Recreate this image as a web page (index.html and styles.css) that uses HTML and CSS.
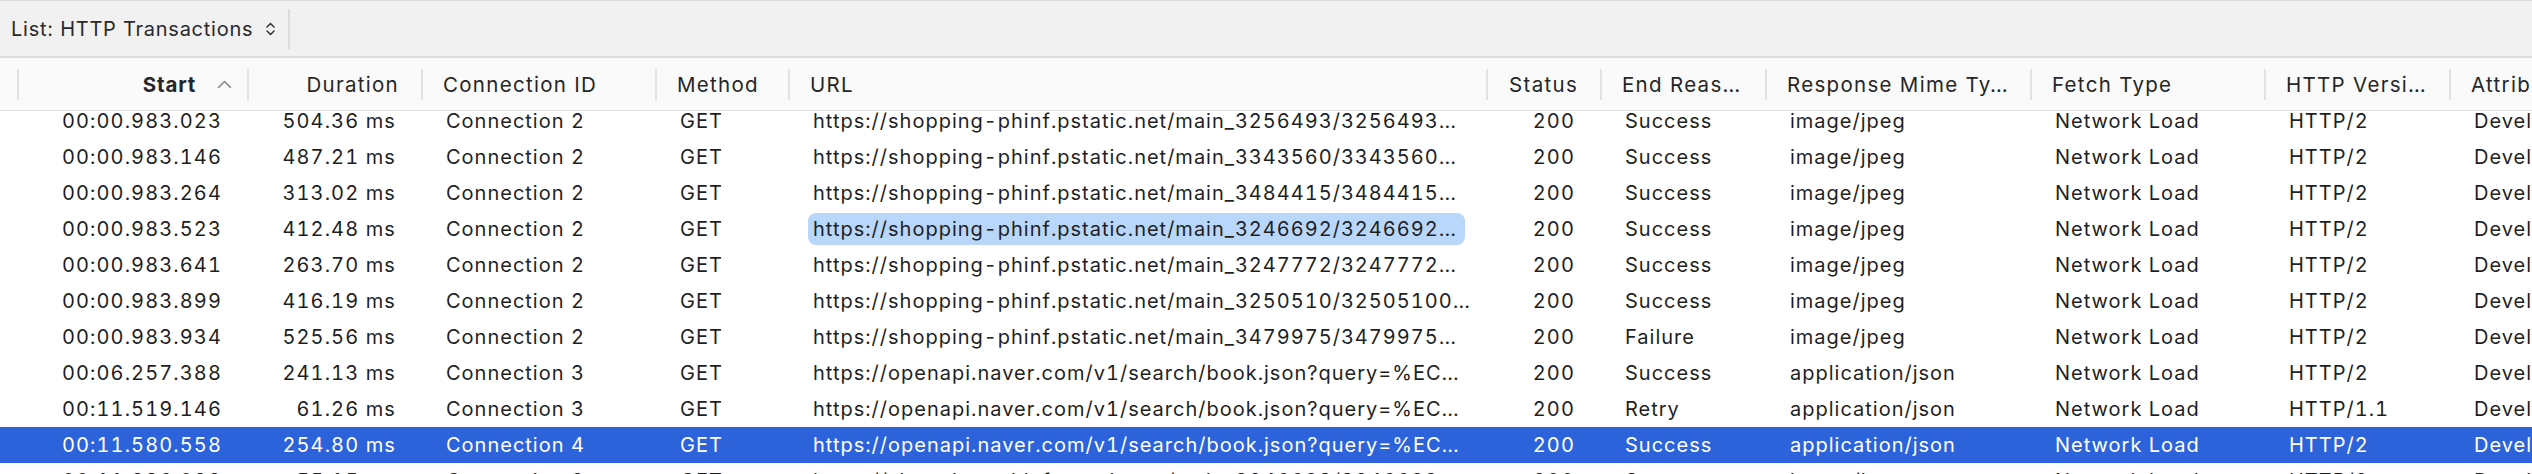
FILE: index.html
```html
<!DOCTYPE html>
<html>
<head>
<meta charset="utf-8">
<link rel="stylesheet" href="styles.css">
</head>
<body>
<div class="app">
  <div class="toolbar">
    <div class="scope">
      <span class="scope-label">List: HTTP Transactions</span>
      <svg class="updown" width="11" height="16" viewBox="0 0 11 16"><path d="M2 6 L5.5 2.5 L9 6" fill="none" stroke="#3a3a3a" stroke-width="1.6" stroke-linecap="round" stroke-linejoin="round"/><path d="M2 10 L5.5 13.5 L9 10" fill="none" stroke="#3a3a3a" stroke-width="1.6" stroke-linecap="round" stroke-linejoin="round"/></svg>
    </div>
    <div class="tb-divider"></div>
  </div>
  <div class="table">
    <div class="thead">
      <div class="th lead"></div>
      <div class="th right sorted"><span class="sep"></span><span class="label">Start</span><svg class="sort" width="15" height="9" viewBox="0 0 15 9"><path d="M1.5 7.5 L7.5 1.5 L13.5 7.5" fill="none" stroke="#8a8a8a" stroke-width="1.6" stroke-linecap="round" stroke-linejoin="round"/></svg></div>
      <div class="th right"><span class="sep"></span><span class="label">Duration</span></div>
      <div class="th"><span class="sep"></span><span class="label">Connection ID</span></div>
      <div class="th"><span class="sep"></span><span class="label">Method</span></div>
      <div class="th"><span class="sep"></span><span class="label">URL</span></div>
      <div class="th right"><span class="sep"></span><span class="label">Status</span></div>
      <div class="th"><span class="sep"></span><span class="label">End Reas…</span></div>
      <div class="th"><span class="sep"></span><span class="label">Response Mime Ty…</span></div>
      <div class="th"><span class="sep"></span><span class="label">Fetch Type</span></div>
      <div class="th"><span class="sep"></span><span class="label">HTTP Versi…</span></div>
      <div class="th"><span class="sep"></span><span class="label">Attribu</span></div>
    </div>
    <div class="tbody">
      <div class="row"><div class="td"></div><div class="td right">00:00.983.023</div><div class="td right">504.36 ms</div><div class="td">Connection 2</div><div class="td">GET</div><div class="td">https://shopping-phinf.pstatic.net/main_3256493/3256493…</div><div class="td right">200</div><div class="td">Success</div><div class="td">image/jpeg</div><div class="td">Network Load</div><div class="td">HTTP/2</div><div class="td">Devel</div></div>
      <div class="row"><div class="td"></div><div class="td right">00:00.983.146</div><div class="td right">487.21 ms</div><div class="td">Connection 2</div><div class="td">GET</div><div class="td">https://shopping-phinf.pstatic.net/main_3343560/3343560…</div><div class="td right">200</div><div class="td">Success</div><div class="td">image/jpeg</div><div class="td">Network Load</div><div class="td">HTTP/2</div><div class="td">Devel</div></div>
      <div class="row"><div class="td"></div><div class="td right">00:00.983.264</div><div class="td right">313.02 ms</div><div class="td">Connection 2</div><div class="td">GET</div><div class="td">https://shopping-phinf.pstatic.net/main_3484415/3484415…</div><div class="td right">200</div><div class="td">Success</div><div class="td">image/jpeg</div><div class="td">Network Load</div><div class="td">HTTP/2</div><div class="td">Devel</div></div>
      <div class="row"><div class="td"></div><div class="td right">00:00.983.523</div><div class="td right">412.48 ms</div><div class="td">Connection 2</div><div class="td">GET</div><div class="td"><span class="pill">https://shopping-phinf.pstatic.net/main_3246692/3246692…</span></div><div class="td right">200</div><div class="td">Success</div><div class="td">image/jpeg</div><div class="td">Network Load</div><div class="td">HTTP/2</div><div class="td">Devel</div></div>
      <div class="row"><div class="td"></div><div class="td right">00:00.983.641</div><div class="td right">263.70 ms</div><div class="td">Connection 2</div><div class="td">GET</div><div class="td">https://shopping-phinf.pstatic.net/main_3247772/3247772…</div><div class="td right">200</div><div class="td">Success</div><div class="td">image/jpeg</div><div class="td">Network Load</div><div class="td">HTTP/2</div><div class="td">Devel</div></div>
      <div class="row"><div class="td"></div><div class="td right">00:00.983.899</div><div class="td right">416.19 ms</div><div class="td">Connection 2</div><div class="td">GET</div><div class="td">https://shopping-phinf.pstatic.net/main_3250510/32505100…</div><div class="td right">200</div><div class="td">Success</div><div class="td">image/jpeg</div><div class="td">Network Load</div><div class="td">HTTP/2</div><div class="td">Devel</div></div>
      <div class="row"><div class="td"></div><div class="td right">00:00.983.934</div><div class="td right">525.56 ms</div><div class="td">Connection 2</div><div class="td">GET</div><div class="td">https://shopping-phinf.pstatic.net/main_3479975/3479975…</div><div class="td right">200</div><div class="td">Failure</div><div class="td">image/jpeg</div><div class="td">Network Load</div><div class="td">HTTP/2</div><div class="td">Devel</div></div>
      <div class="row"><div class="td"></div><div class="td right">00:06.257.388</div><div class="td right">241.13 ms</div><div class="td">Connection 3</div><div class="td">GET</div><div class="td">https://openapi.naver.com/v1/search/book.json?query=%EC…</div><div class="td right">200</div><div class="td">Success</div><div class="td">application/json</div><div class="td">Network Load</div><div class="td">HTTP/2</div><div class="td">Devel</div></div>
      <div class="row"><div class="td"></div><div class="td right">00:11.519.146</div><div class="td right">61.26 ms</div><div class="td">Connection 3</div><div class="td">GET</div><div class="td">https://openapi.naver.com/v1/search/book.json?query=%EC…</div><div class="td right">200</div><div class="td">Retry</div><div class="td">application/json</div><div class="td">Network Load</div><div class="td">HTTP/1.1</div><div class="td">Devel</div></div>
      <div class="row selected"><div class="td"></div><div class="td right">00:11.580.558</div><div class="td right">254.80 ms</div><div class="td">Connection 4</div><div class="td">GET</div><div class="td">https://openapi.naver.com/v1/search/book.json?query=%EC…</div><div class="td right">200</div><div class="td">Success</div><div class="td">application/json</div><div class="td">Network Load</div><div class="td">HTTP/2</div><div class="td">Devel</div></div>
      <div class="row"><div class="td"></div><div class="td right">00:11.836.028</div><div class="td right">55.15 ms</div><div class="td">Connection 2</div><div class="td">GET</div><div class="td">https://shopping-phinf.pstatic.net/main_3246693/3246693…</div><div class="td right">200</div><div class="td">Success</div><div class="td">image/jpeg</div><div class="td">Network Load</div><div class="td">HTTP/2</div><div class="td">Devel</div></div>
    </div>
  </div>
</div>
</body>
</html>
```

FILE: styles.css
```css
html, body {
  margin: 0;
  padding: 0;
  background: #ffffff;
}
body {
  width: 2532px;
  height: 474px;
  overflow: hidden;
  font-family: "Inter", "Roboto", "Liberation Sans", sans-serif;
  font-size: 20px;
  color: #1f1f1f;
}
.app {
  display: flex;
  flex-direction: column;
  width: 2532px;
  height: 474px;
  overflow: hidden;
}
.toolbar {
  height: 55px;
  flex: none;
  background: #f1f1f1;
  border-top: 1px solid #dcdcdc;
  border-bottom: 2px solid #dddddd;
  display: flex;
  align-items: center;
}
.scope {
  display: flex;
  align-items: center;
  gap: 12px;
  padding-left: 11px;
  padding-right: 12px;
}
.scope-label {
  color: #2a2a2a;
  font-size: 20px;
  letter-spacing: 0.75px;
}
.updown {
  display: block;
}
.tb-divider {
  width: 2px;
  height: 40px;
  background: #dcdcdc;
}
.table {
  display: flex;
  flex-direction: column;
  flex: 1;
  min-height: 0;
}
.thead, .row {
  display: grid;
  grid-template-columns: 17px 230px 174px 234px 133px 698px 114px 165px 265px 234px 185px 300px;
}
.thead {
  height: 52px;
  flex: none;
  background: #fafafa;
  border-bottom: 1px solid #e2e2e2;
  position: relative;
  z-index: 1;
}
.th {
  display: flex;
  align-items: center;
  padding: 0 22px;
  color: #262626;
  font-size: 20.5px;
  letter-spacing: 1.3px;
  white-space: nowrap;
  overflow: hidden;
  position: relative;
}
.th.lead {
  padding: 0;
}
.th .sep {
  position: absolute;
  left: 0;
  top: 11px;
  width: 2px;
  height: 31px;
  background: #e2e2e2;
}
.th.right {
  justify-content: flex-end;
}
.th.sorted {
  padding-right: 15px;
  gap: 21px;
}
.th.sorted .label {
  font-weight: 700;
  letter-spacing: 0.8px;
}
.sort {
  display: block;
}
.tbody {
  margin-top: -8px;
  display: flex;
  flex-direction: column;
}
.row {
  height: 36px;
  flex: none;
}
.td {
  line-height: 36px;
  padding: 0 25px;
  white-space: nowrap;
  overflow: hidden;
  letter-spacing: 1px;
  font-variant-numeric: tabular-nums;
}
.td.right {
  text-align: right;
  padding-right: 25px;
  letter-spacing: 1.1px;
}
.row.selected {
  background: #2c63db;
  color: #ffffff;
}
.pill {
  display: inline-block;
  background: #b9d6fb;
  border-radius: 8px;
  line-height: 32px;
  margin: 2px 0 0 -5px;
  padding: 0 8px 0 5px;
  vertical-align: top;
}
```
